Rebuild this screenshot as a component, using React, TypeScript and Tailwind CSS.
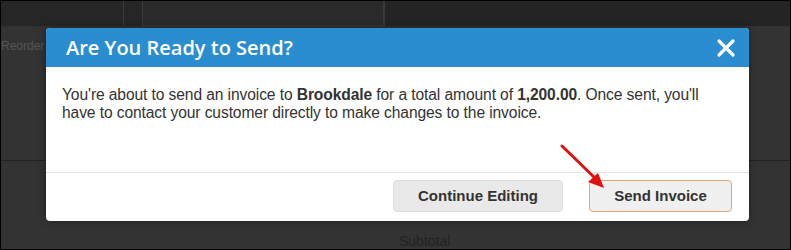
import React from "react";

export default function App() {
  return (
    <div className="relative w-[791px] h-[250px] overflow-hidden bg-[#333333] border border-black font-['Liberation_Sans',Arial,sans-serif]">
      {/* background page (dimmed) */}
      <div className="flex flex-col h-full">
        <div className="flex h-[27px] bg-[#262626]">
          <div className="w-[123px] border-r border-[#3a3a3a]" />
          <div className="w-[18px]" />
          <div className="w-[242px] border border-[#3c3c3c] border-t-0 bg-[#2a2a2a]" />
          <div className="flex-1 border-l border-[#3a3a3a] bg-[#242424]" />
        </div>
        <div className="flex h-[144px] border-b border-[#222]">
          <div className="w-[45px] pt-[11px] text-[12px] text-[#555] overflow-hidden whitespace-nowrap">Reorder</div>
        </div>
        <div className="flex-1 flex flex-col items-start pl-[398px] pt-[72px]">
          <span className="text-[14px] leading-[16px] text-[#222]">Subtotal</span>
        </div>
      </div>

      {/* dialog */}
      <div className="absolute left-[45px] top-[27px] w-[703px] h-[193px] bg-white rounded-[4px] overflow-hidden flex flex-col shadow-[0_0_8px_rgba(0,0,0,0.4)]">
        <div className="h-[39px] bg-[#2a8dd0] flex items-center justify-between pl-[20px] pr-[12px]">
          <span className="text-white text-[20px] font-semibold font-['Open_Sans',sans-serif] leading-none">Are You Ready to Send?</span>
          <svg width="20" height="20" viewBox="0 0 20 20" className="mr-[1px]">
            <path d="M3 3 L17 17 M17 3 L3 17" stroke="white" strokeWidth="3.2" strokeLinecap="round" />
          </svg>
        </div>
        <div className="h-[105px] pl-[16px] pt-[19px]">
          <p className="w-[664px] text-[15.6px] leading-[18px] text-[#333] tracking-[-0.1px]">
            You're about to send an invoice to <b>Brookdale</b> for a total amount of <b>1,200.00</b>. Once sent, you'll have to contact your customer directly to make changes to the invoice.
          </p>
        </div>
        <div className="flex-1 border-t border-[#e3e3e3] flex justify-end items-start pt-[7px] pr-[17px] gap-[26px]">
          <button className="w-[170px] h-[32px] rounded-[4px] bg-[#e9e9e9] border border-[#dedede] text-[15px] font-bold text-[#333]">Continue Editing</button>
          <button className="w-[143px] h-[32px] rounded-[4px] bg-[#f0f0f0] border border-[#e2a878] text-[15px] font-bold text-[#333]">Send Invoice</button>
        </div>
      </div>

      {/* red annotation arrow */}
      <svg className="absolute left-[555px] top-[140px]" width="60" height="55" viewBox="0 0 60 55">
        <line x1="6" y1="5" x2="40" y2="38" stroke="#e01010" strokeWidth="3" strokeLinecap="round" />
        <polygon points="48,47 32,41 42,32" fill="#e01010" />
      </svg>
    </div>
  );
}
